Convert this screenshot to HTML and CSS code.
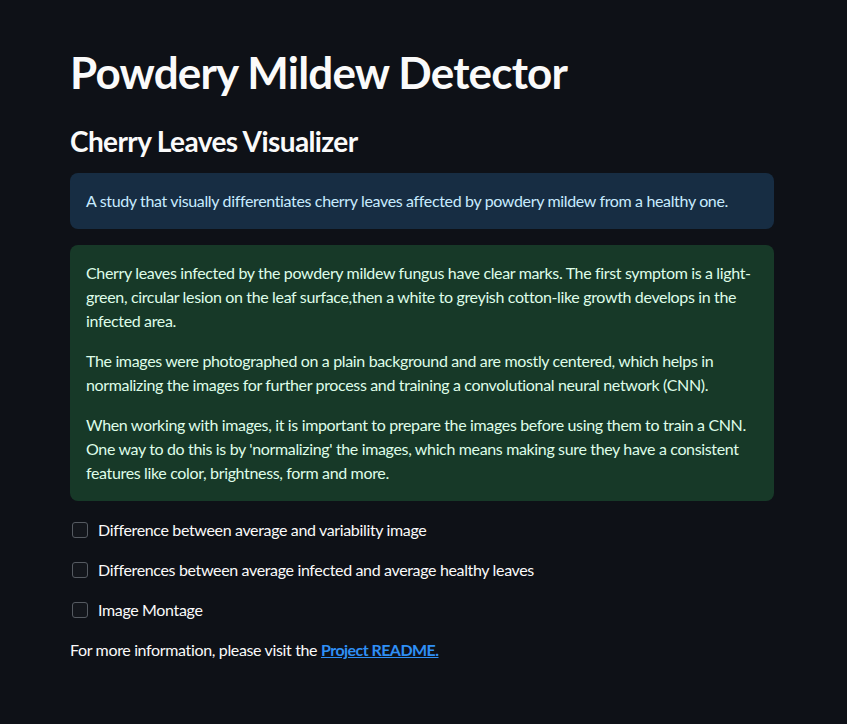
FILE: index.html
```html
<!DOCTYPE html>
<html lang="en">
<head>
<meta charset="utf-8">
<title>Powdery Mildew Detector</title>
<link rel="stylesheet" href="styles.css">
</head>
<body>
<main class="page">
  <h1 class="title">Powdery Mildew Detector</h1>
  <h3 class="subtitle">Cherry Leaves Visualizer</h3>
  <div class="alert alert-info">
    <p>A study that visually differentiates cherry leaves affected by powdery mildew from a healthy one.</p>
  </div>
  <div class="alert alert-success">
    <p>Cherry leaves infected by the powdery mildew fungus have clear marks. The first symptom is a light-green, circular lesion on the leaf surface,then a white to greyish cotton-like growth develops in the infected area.</p>
    <p>The images were photographed on a plain background and are mostly centered, which helps in normalizing the images for further process and training a convolutional neural network (CNN).</p>
    <p>When working with images, it is important to prepare the images before using them to train a CNN. One way to do this is by 'normalizing' the images, which means making sure they have a consistent features like color, brightness, form and more.</p>
  </div>
  <label class="check"><span class="box"></span><span class="check-label">Difference between average and variability image</span></label>
  <label class="check"><span class="box"></span><span class="check-label">Differences between average infected and average healthy leaves</span></label>
  <label class="check"><span class="box"></span><span class="check-label">Image Montage</span></label>
  <p class="more">For more information, please visit the <a href="#" class="link">Project README.</a></p>
</main>
</body>
</html>
```
FILE: styles.css
```css
html, body {
  margin: 0;
  padding: 0;
  background: #0e1117;
}
body {
  color: #fafafa;
  font-family: Lato, "Noto Sans", sans-serif;
  font-size: 16px;
  line-height: 24px;
  letter-spacing: -0.35px;
}
.page {
  width: 704px;
  margin: 0 0 0 70px;
  padding: 44px 0 40px;
  display: flex;
  flex-direction: column;
}
.title {
  margin: 0;
  font-size: 44px;
  line-height: 56px;
  font-weight: 700;
  letter-spacing: -0.8px;
}
.subtitle {
  margin: 23px 0 0;
  font-size: 28px;
  line-height: 36px;
  font-weight: 700;
  letter-spacing: -0.6px;
}
.alert {
  border-radius: 8px;
  padding: 16px;
}
.alert p {
  margin: 0;
}
.alert p + p {
  margin-top: 16px;
}
.alert-info {
  margin-top: 14px;
  background: #172d43;
  color: #c7ebff;
}
.alert-success {
  margin-top: 16px;
  background: #173928;
  color: #dffde9;
}
.check {
  display: flex;
  align-items: center;
  gap: 10px;
  height: 24px;
  margin-top: 16px;
  padding-left: 2px;
}
.alert-success + .check {
  margin-top: 17px;
}
.box {
  width: 14px;
  height: 14px;
  border: 1px solid #555a61;
  background: #13161c;
  border-radius: 3px;
  flex: none;
}
.more {
  margin: 16px 0 0;
}
.link {
  color: #2f8ff5;
  font-weight: 700;
  letter-spacing: -0.55px;
  text-decoration: underline;
}
```
